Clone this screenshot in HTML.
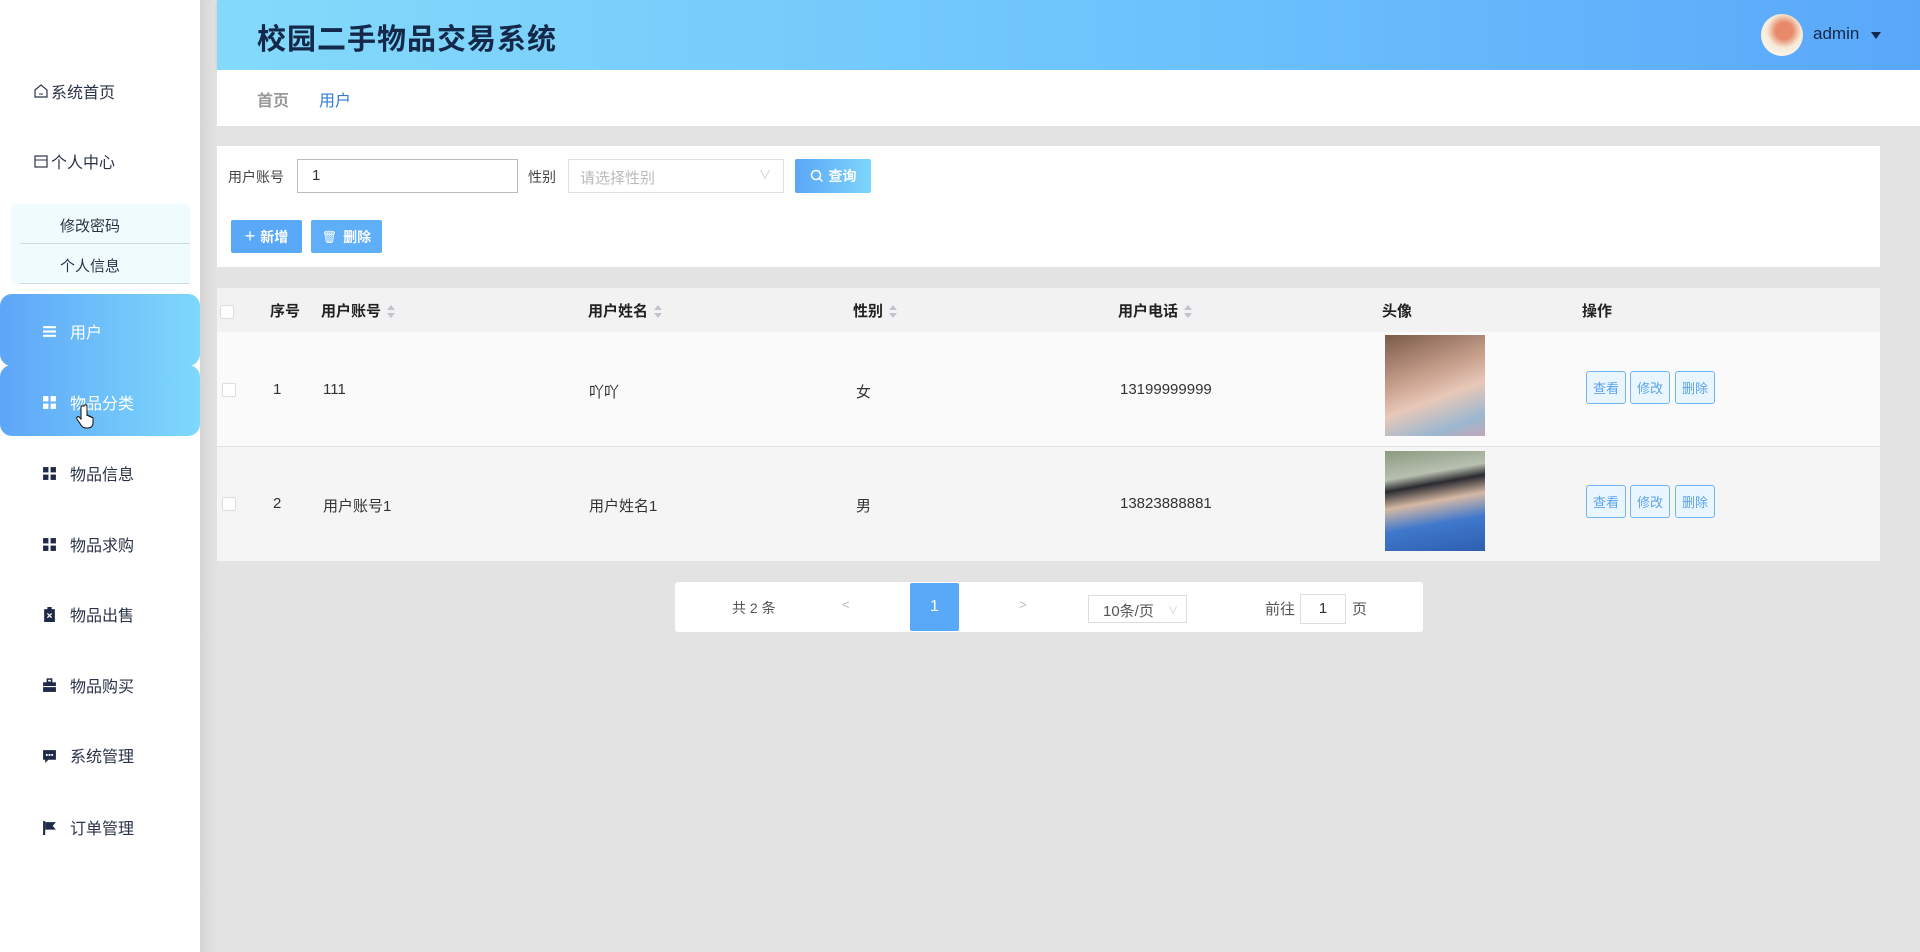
<!DOCTYPE html>
<html><head><meta charset="utf-8"><style>
*{box-sizing:border-box;margin:0;padding:0}
body{width:1920px;height:952px;background:#e3e3e3;font-family:"Liberation Sans","Noto Sans CJK SC",sans-serif;position:relative;overflow:hidden;color:#333}
.a{position:absolute}
#side{left:0;top:0;width:200px;height:952px;background:#fff}
#shadow{left:200px;top:0;width:17px;height:952px;background:linear-gradient(90deg,#d4d4d4,#e3e3e3)}
.mi{position:absolute;left:0;width:200px;font-size:16px;color:#2a3347;display:flex;align-items:center}
.ic{width:15px;height:15px;margin-right:13px;margin-left:42px;display:inline-block}
#hdr{left:217px;top:0;width:1703px;height:70px;background:linear-gradient(90deg,#84dafa,#6cc3fc 55%,#5aa7fa);box-shadow:0 2px 4px rgba(0,0,0,.12)}
.btn{position:absolute;color:#fff;font-size:14px;font-weight:bold;display:flex;align-items:center;justify-content:center;border-radius:2px}
.th{position:absolute;top:300px;font-size:15px;font-weight:bold;color:#222}
.td{position:absolute;font-size:15px;color:#333}
.sm{position:absolute;width:40px;height:33px;border:1px solid #72b4f4;border-radius:3px;background:#eaf6ff;color:#5aa3f0;font-size:13px;display:flex;align-items:center;justify-content:center}
.sort{display:inline-block;width:8px;height:14px;margin-left:6px;vertical-align:middle;position:relative}
.sort:before{content:"";position:absolute;left:0;top:0;border:4px solid transparent;border-bottom:5px solid #c0c4cc;border-top:0}
.sort:after{content:"";position:absolute;left:0;top:8px;border:4px solid transparent;border-top:5px solid #c0c4cc;border-bottom:0}
.cb{position:absolute;width:14px;height:14px;border:1px solid #ddd;background:#fff;border-radius:2px}
</style></head><body>
<div id="side" class="a">
 <div class="mi" style="top:80px;height:22px"><svg style="margin-left:33px;margin-right:2px" width="16" height="16" viewBox="0 0 16 16"><path d="M2 7 L8 2 L14 7 V14 H2 Z" fill="none" stroke="#2a3347" stroke-width="1.2"/><path d="M6 11h4" stroke="#2a3347"/></svg>系统首页</div>
 <div class="mi" style="top:150px;height:22px"><svg style="margin-left:33px;margin-right:2px" width="16" height="16" viewBox="0 0 16 16"><rect x="2" y="3" width="12" height="11" fill="none" stroke="#2a3347" stroke-width="1.2"/><path d="M2 7h12" stroke="#2a3347"/></svg>个人中心</div>
 <div class="a" style="left:11px;top:204px;width:179px;height:80px;background:#f0fbfe;border-radius:6px"></div>
 <div class="a" style="left:20px;top:243px;width:170px;height:1px;background:#c8dce6"></div>
 <div class="a" style="left:20px;top:283px;width:170px;height:1px;background:#c8dce6"></div>
 <div class="mi" style="top:214px;left:60px;width:100px;height:22px;font-size:15px">修改密码</div>
 <div class="mi" style="top:254px;left:60px;width:100px;height:22px;font-size:15px">个人信息</div>
 <div class="a" style="left:0;top:294px;width:200px;height:72px;border-radius:12px;background:linear-gradient(90deg,#5da6f8,#7ed9fc)"></div>
 <div class="a" style="left:0;top:365px;width:200px;height:71px;border-radius:12px;background:linear-gradient(90deg,#5da6f8,#7ed9fc)"></div>
 <div class="mi" style="top:320px;height:22px;color:#fff"><svg class="ic" viewBox="0 0 14 14"><path d="M1 3h12M1 7h12M1 11h12" stroke="#fff" stroke-width="2"/></svg>用户</div>
 <div class="mi" style="top:391px;height:22px;color:#fff"><svg class="ic" viewBox="0 0 14 14"><rect x="1" y="1" width="5" height="5" fill="#fff"/><rect x="8" y="1" width="5" height="5" fill="#fff"/><rect x="1" y="8" width="5" height="5" fill="#fff"/><rect x="8" y="8" width="5" height="5" fill="#fff"/></svg>物品分类</div>
 <div class="mi" style="top:462px;height:22px"><svg class="ic" viewBox="0 0 14 14"><rect x="1" y="1" width="5" height="5" fill="#1e2a48"/><rect x="8" y="1" width="5" height="5" fill="#1e2a48"/><rect x="1" y="8" width="5" height="5" fill="#1e2a48"/><rect x="8" y="8" width="5" height="5" fill="#1e2a48"/></svg>物品信息</div>
 <div class="mi" style="top:533px;height:22px"><svg class="ic" viewBox="0 0 14 14"><rect x="1" y="1" width="5" height="5" fill="#1e2a48"/><rect x="8" y="1" width="5" height="5" fill="#1e2a48"/><rect x="1" y="8" width="5" height="5" fill="#1e2a48"/><rect x="8" y="8" width="5" height="5" fill="#1e2a48"/></svg>物品求购</div>
 <div class="mi" style="top:603px;height:22px"><svg class="ic" viewBox="0 0 14 14"><rect x="2" y="2" width="10" height="12" fill="#1e2a48"/><rect x="5" y="0" width="4" height="3" fill="#1e2a48"/><path d="M5 6l4 4M9 6l-4 4" stroke="#fff" stroke-width="1.2"/></svg>物品出售</div>
 <div class="mi" style="top:674px;height:22px"><svg class="ic" viewBox="0 0 14 14"><rect x="1" y="4" width="12" height="9" fill="#1e2a48"/><rect x="5" y="1" width="4" height="3" fill="none" stroke="#1e2a48" stroke-width="1.4"/><path d="M1 8h12" stroke="#fff"/></svg>物品购买</div>
 <div class="mi" style="top:744px;height:22px"><svg class="ic" viewBox="0 0 14 14"><path d="M1 2h12v9H6l-3 3v-3H1z" fill="#1e2a48"/><circle cx="4.5" cy="6.5" r="1" fill="#fff"/><circle cx="7" cy="6.5" r="1" fill="#fff"/><circle cx="9.5" cy="6.5" r="1" fill="#fff"/></svg>系统管理</div>
 <div class="mi" style="top:816px;height:22px"><svg class="ic" viewBox="0 0 14 14"><path d="M2 1v13" stroke="#1e2a48" stroke-width="2"/><path d="M3 2h10l-3 3.5 3 3.5H3z" fill="#1e2a48"/></svg>订单管理</div>
 <svg class="a" style="left:76px;top:404px" width="18" height="26" viewBox="0 0 18 26"><path d="M5 2v13l-2-2c-1-1-3 0-2 2l4 6c1 2 3 3 5 3h2c3 0 5-2 5-5v-5c0-1-2-1-2 0v-1c0-1-2-1-2 0v-1c0-1-2-1-2 0V2c0-1.5-3-1.5-3 0z" fill="#fff" stroke="#111" stroke-width="1"/></svg>
</div>
<div id="shadow" class="a"></div>
<div id="hdr" class="a">
 <div class="a" style="left:40px;top:16px;font-size:29px;font-weight:bold;color:#14284a;letter-spacing:1px">校园二手物品交易系统</div>
 <div class="a" style="left:1544px;top:14px;width:42px;height:42px;border-radius:50%;background:radial-gradient(circle at 55% 40%,#e88a6a 0 25%,#f6ead8 50%,#fff 100%)"></div>
 <div class="a" style="left:1596px;top:24px;font-size:17px;color:#14284a">admin</div>
 <div class="a" style="left:1654px;top:32px;border-left:5px solid transparent;border-right:5px solid transparent;border-top:7px solid #14284a"></div>
</div>
<div class="a" style="left:217px;top:70px;width:1703px;height:56px;background:#fff"></div>
<div class="a" style="left:257px;top:87px;font-size:16px;color:#999;font-weight:bold">首页</div>
<div class="a" style="left:319px;top:87px;font-size:16px;color:#2f7bd0">用户</div>

<div class="a" style="left:217px;top:146px;width:1663px;height:121px;background:#fff"></div>
<div class="a" style="left:228px;top:167px;font-size:14px;color:#444">用户账号</div>
<div class="a" style="left:297px;top:159px;width:221px;height:34px;border:1px solid #bbb;font-size:15px;padding:7px 14px;color:#333">1</div>
<div class="a" style="left:528px;top:167px;font-size:14px;color:#444">性别</div>
<div class="a" style="left:568px;top:159px;width:216px;height:34px;border:1px solid #e0e0e0;font-size:15px;padding:7px 11px;color:#bbb">请选择性别<span style="position:absolute;right:12px;top:6px;color:#ccc;font-size:12px">&#8744;</span></div>
<div class="btn" style="left:795px;top:159px;width:76px;height:34px;background:linear-gradient(90deg,#5ba6f8,#7cd6fb)"><svg width="14" height="14" viewBox="0 0 14 14" style="margin-right:5px"><circle cx="6" cy="6" r="4.5" fill="none" stroke="#fff" stroke-width="1.5"/><path d="M9.5 9.5l3 3" stroke="#fff" stroke-width="1.5"/></svg>查询</div>
<div class="btn" style="left:231px;top:220px;width:71px;height:33px;background:#5aa8f8"><span style="font-size:18px;font-weight:normal;margin-right:5px">+</span>新增</div>
<div class="btn" style="left:311px;top:220px;width:71px;height:33px;background:#5eaef8"><span style="font-size:12px;font-weight:normal;margin-right:6px">&#128465;</span>删除</div>

<div class="a" style="left:217px;top:288px;width:1663px;height:273px;background:#fafafa"></div>
<div class="a" style="left:217px;top:288px;width:1663px;height:44px;background:#f2f2f2"></div>
<div class="a" style="left:217px;top:446px;width:1663px;height:115px;background:#f5f5f5;border-top:1px solid #e2e2e2"></div>
<div class="cb" style="left:220px;top:305px"></div>
<div class="th" style="left:270px">序号</div>
<div class="th" style="left:321px">用户账号<span class="sort"></span></div>
<div class="th" style="left:588px">用户姓名<span class="sort"></span></div>
<div class="th" style="left:853px">性别<span class="sort"></span></div>
<div class="th" style="left:1118px">用户电话<span class="sort"></span></div>
<div class="th" style="left:1382px">头像</div>
<div class="th" style="left:1582px">操作</div>

<div class="cb" style="left:222px;top:383px"></div>
<div class="td" style="left:273px;top:381px">1</div>
<div class="td" style="left:323px;top:381px">111</div>
<div class="td" style="left:589px;top:381px">吖吖</div>
<div class="td" style="left:856px;top:381px">女</div>
<div class="td" style="left:1120px;top:381px">13199999999</div>
<div class="a" style="left:1385px;top:335px;width:100px;height:101px;background:linear-gradient(160deg,#7a5a48,#c9a08e 40%,#e8c8b8 60%,#9bb7d0 85%,#c3a7b7)"></div>
<div class="sm" style="left:1586px;top:371px">查看</div>
<div class="sm" style="left:1630px;top:371px">修改</div>
<div class="sm" style="left:1675px;top:371px">删除</div>

<div class="cb" style="left:222px;top:497px"></div>
<div class="td" style="left:273px;top:495px">2</div>
<div class="td" style="left:323px;top:495px">用户账号1</div>
<div class="td" style="left:589px;top:495px">用户姓名1</div>
<div class="td" style="left:856px;top:495px">男</div>
<div class="td" style="left:1120px;top:495px">13823888881</div>
<div class="a" style="left:1385px;top:451px;width:100px;height:100px;background:linear-gradient(170deg,#8a9a80 0,#b8c0b0 25%,#2a2a30 35%,#d6b8a4 50%,#3f78cc 70%,#2f5fb0 100%)"></div>
<div class="sm" style="left:1586px;top:485px">查看</div>
<div class="sm" style="left:1630px;top:485px">修改</div>
<div class="sm" style="left:1675px;top:485px">删除</div>

<div class="a" style="left:675px;top:582px;width:748px;height:50px;background:#fff;border-radius:3px"></div>
<div class="a" style="left:732px;top:598px;font-size:14px;color:#555">共 2 条</div>
<div class="a" style="left:842px;top:597px;font-size:13px;color:#bbb">&lt;</div>
<div class="a" style="left:910px;top:583px;width:49px;height:48px;background:#5aa8f8;color:#fff;font-size:16px;display:flex;align-items:center;justify-content:center;border-radius:2px">1</div>
<div class="a" style="left:1019px;top:597px;font-size:13px;color:#bbb">&gt;</div>
<div class="a" style="left:1088px;top:595px;width:99px;height:28px;border:1px solid #ddd;font-size:15px;color:#555;padding:4px 14px">10条/页<span style="position:absolute;right:8px;top:6px;font-size:10px;color:#ccc">&#8744;</span></div>
<div class="a" style="left:1265px;top:598px;font-size:15px;color:#555">前往</div>
<div class="a" style="left:1300px;top:594px;width:46px;height:30px;border:1px solid #ddd;font-size:15px;color:#333;text-align:center;line-height:28px">1</div>
<div class="a" style="left:1352px;top:598px;font-size:15px;color:#555">页</div>
</body></html>
